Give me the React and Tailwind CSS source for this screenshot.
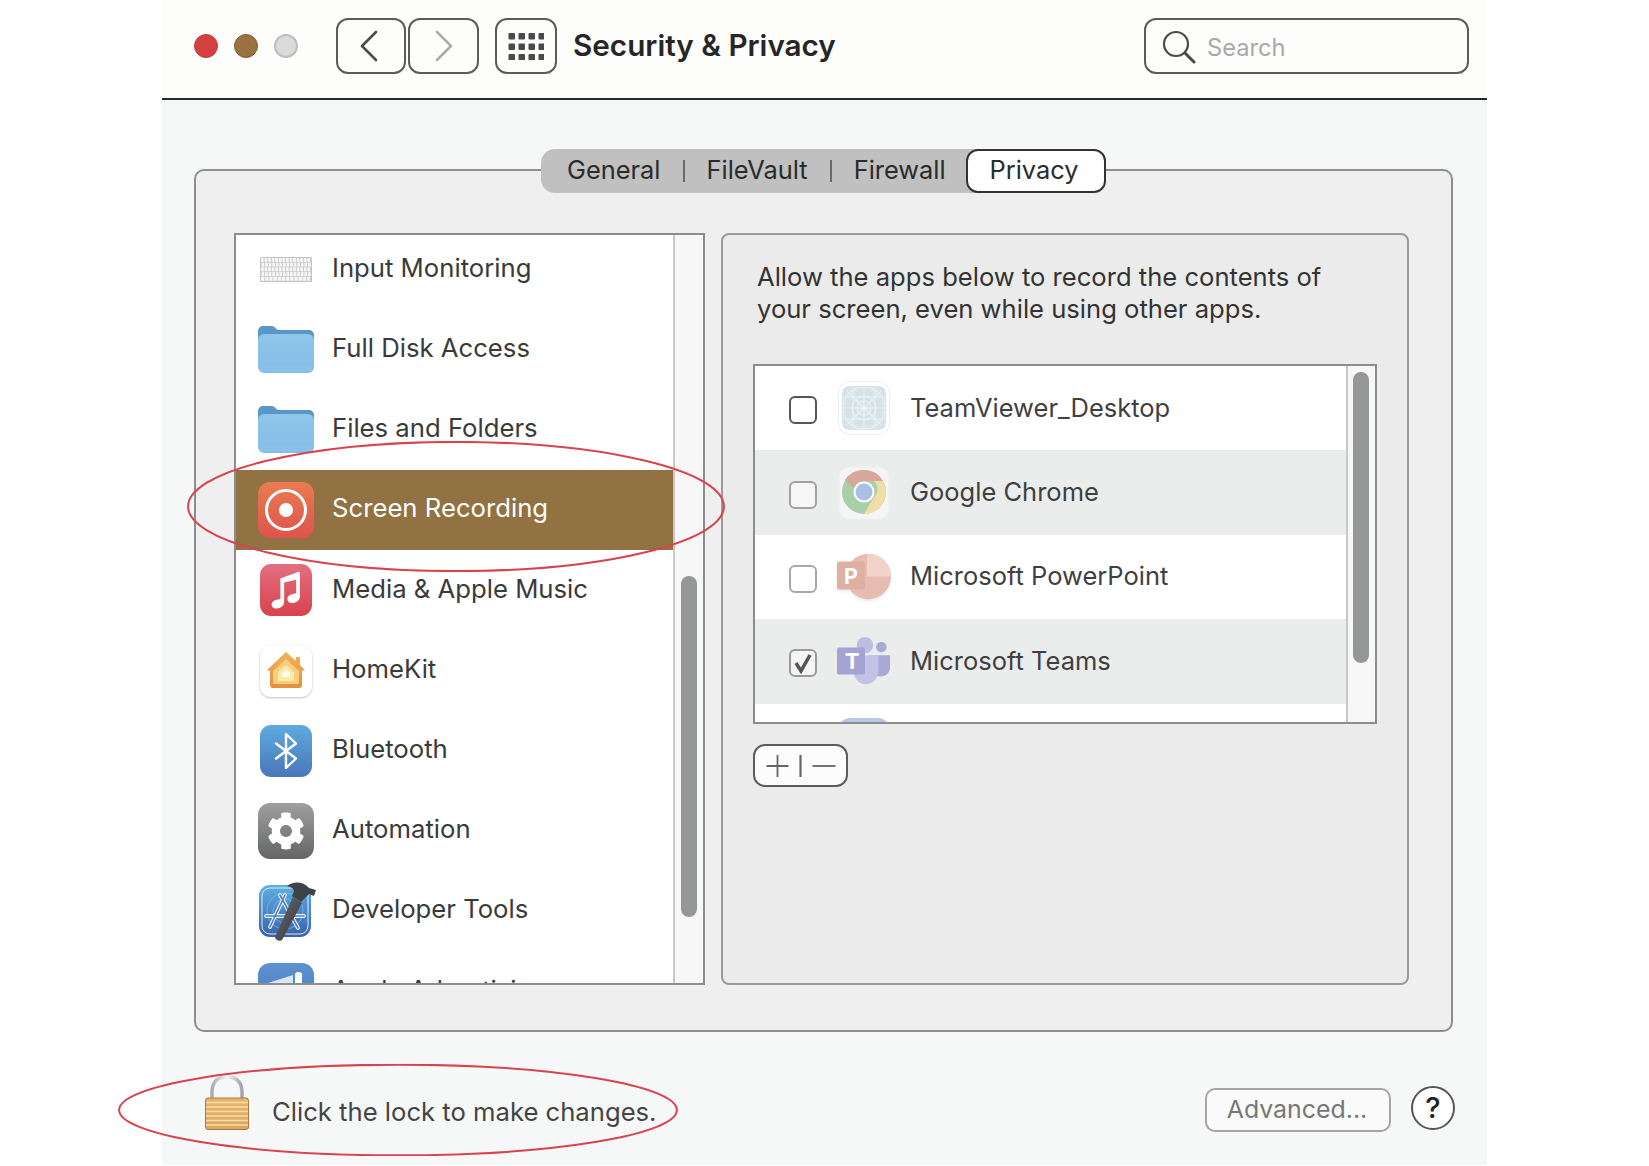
import { FaCog } from "react-icons/fa";

const Squircle = ({ id, from, to }) => (
  <>
    <defs>
      <linearGradient id={id} x1="0" y1="0" x2="0" y2="1">
        <stop offset="0" stopColor={from} />
        <stop offset="1" stopColor={to} />
      </linearGradient>
    </defs>
    <rect x="0" y="0" width="56" height="56" rx="12" fill={`url(#${id})`} />
  </>
);

const KeyboardIcon = () => {
  const rows = [14, 14, 14, 14, 12];
  return (
    <svg width="52" height="25" viewBox="0 0 52 25">
      <rect width="52" height="25" rx="1.5" fill="#c4c4c4" />
      {rows.map((count, r) =>
        Array.from({ length: count }).map((_, k) => {
          const w = 50 / count;
          return (
            <rect
              key={`${r}-${k}`}
              x={1 + k * w + (r % 2) * 0.5}
              y={1 + r * 4.7}
              width={w - 0.8}
              height={4}
              fill="#f7f7f7"
            />
          );
        })
      )}
    </svg>
  );
};

const FolderIcon = ({ id }) => (
  <svg width="56" height="48" viewBox="0 0 56 48">
    <defs>
      <linearGradient id={id} x1="0" y1="0" x2="0" y2="1">
        <stop offset="0" stopColor="#8ec5ea" />
        <stop offset="1" stopColor="#85bde5" />
      </linearGradient>
    </defs>
    <path d="M0 30V5a5 5 0 0 1 5-5h9c3 0 4 4 7 4h30a5 5 0 0 1 5 5v21z" fill="#5a96c6" />
    <rect x="0" y="8" width="56" height="39" rx="6" fill={`url(#${id})`} />
    <path d="M0 41h56M1 44h54" stroke="#9ccbeb" strokeWidth="0.7" />
  </svg>
);

const RecordIcon = () => (
  <svg width="56" height="56" viewBox="0 0 56 56">
    <Squircle id="rec" from="#e87c50" to="#dd544e" />
    <circle cx="28" cy="28" r="19.500" fill="none" stroke="#fff" strokeWidth="3" />
    <circle cx="28" cy="28" r="7" fill="#fff" />
  </svg>
);

const MusicIcon = () => (
  <svg width="52" height="52" viewBox="0 0 56 56">
    <Squircle id="music" from="#e2707f" to="#d8424e" />
    <path
      transform="translate(0 -2)"
      d="M21 18 41 10.500c1-.4 2 .2 2 1.500V37c0 3.500-3 6.500-7.500 7-3.500.4-6-1.500-6-4.300 0-2.900 2.300-4.700 5.500-5.300l4-.8V19l-13 3V43c0 3.500-3 6.500-7.500 7-3.500.4-6-1.500-6-4.300 0-2.900 2.300-4.700 5.500-5.300l4-.8V20.500c0-1.300 0-2.100-1-2.500z"
      fill="#fff"
    />
  </svg>
);

const HomeIcon = () => (
  <svg width="52" height="52" viewBox="0 0 52 52" className="drop-shadow-[0_1px_1px_rgba(0,0,0,0.25)]">
    <defs>
      <linearGradient id="house" x1="0" y1="0" x2="0" y2="1">
        <stop offset="0" stopColor="#f2b25a" />
        <stop offset="1" stopColor="#e48f3c" />
      </linearGradient>
    </defs>
    <rect width="52" height="52" rx="11" fill="#fff" />
    <path d="M7 25 26 7l10 9v-4h4v8l5 5-3 1v14a3 3 0 0 1-3 3H13a3 3 0 0 1-3-3V26z" fill="url(#house)" />
    <path d="M13 26 26 14l13 12v12a1 1 0 0 1-1 1H14a1 1 0 0 1-1-1z" fill="#f6cf7c" />
    <path d="M18 27l8-7 8 7v8a1 1 0 0 1-1 1H19a1 1 0 0 1-1-1z" fill="#fbe9a8" />
    <path d="M22 28l4-3.500 4 3.500v4h-8z" fill="#fffbe8" />
  </svg>
);

const BluetoothIcon = () => (
  <svg width="52" height="52" viewBox="0 0 52 52">
    <defs>
      <linearGradient id="bt" x1="0" y1="0" x2="0" y2="1">
        <stop offset="0" stopColor="#5eabdf" />
        <stop offset="1" stopColor="#4a76bb" />
      </linearGradient>
    </defs>
    <rect width="52" height="52" rx="11" fill="url(#bt)" />
    <path
      d="M16 18.500 36 33.500 26 43V9l10 9.500-20 15"
      fill="none"
      stroke="#fff"
      strokeWidth="2.400"
      strokeLinejoin="round"
      strokeLinecap="round"
    />
  </svg>
);

const AutomationIcon = () => (
  <div className="w-[56px] h-[56px] rounded-[12px] bg-gradient-to-b from-[#a0a0a0] to-[#646566] flex items-center justify-center">
    <FaCog className="text-white w-[38px] h-[38px]" />
  </div>
);

const DevToolsIcon = () => (
  <svg width="58" height="62" viewBox="0 0 58 62" className="ml-[3px] overflow-visible">
    <defs>
      <linearGradient id="xc" x1="0" y1="0" x2="0" y2="1">
        <stop offset="0" stopColor="#5cb1e2" />
        <stop offset="1" stopColor="#3a60ad" />
      </linearGradient>
      <linearGradient id="hammer" x1="0" y1="0" x2="1" y2="1">
        <stop offset="0" stopColor="#6d7075" />
        <stop offset="1" stopColor="#2f3136" />
      </linearGradient>
    </defs>
    <rect x="0" y="5" width="52" height="52" rx="11" fill="url(#xc)" />
    <rect x="3" y="8" width="46" height="46" rx="8" fill="none" stroke="#dbe9f6" strokeWidth="1" />
    <circle cx="26" cy="31" r="18" fill="none" stroke="#7fbce6" strokeWidth="0.7" />
    <circle cx="26" cy="31" r="12" fill="none" stroke="#7fbce6" strokeWidth="0.7" />
    <path d="M21 15l18 33M26 15 11 47M7 36h38" fill="none" stroke="#eef4fb" strokeWidth="3.800" strokeLinecap="round" />
    <path d="M21 15l18 33M26 15 11 47M7 36h38" fill="none" stroke="#4c7fc4" strokeWidth="1.600" strokeLinecap="round" />
    <path d="M34 17l9 6L23 60c-1.500 2-7 0-7-3z" fill="url(#hammer)" />
    <path d="M28 6C34 1 44 1 50 8l7 2-2 6-5-2-8 8-9-6 2-5c-1-3-3-4-7-5z" fill="#3f4247" />
  </svg>
);

const AdvertisingIcon = () => (
  <svg width="56" height="56" viewBox="0 0 56 56">
    <Squircle id="ads" from="#5b92cf" to="#4a76bb" />
    <path d="M10 20 35 12v30L10 34z" fill="#dbe6f4" />
    <rect x="37" y="9" width="7" height="38" rx="3" fill="#fff" />
  </svg>
);

const TeamViewerIcon = () => (
  <svg width="52" height="54" viewBox="0 0 52 54">
    <rect x="0.500" y="0.500" width="51" height="53" rx="11" fill="#fff" stroke="#eeeeee" />
    <rect x="4" y="5" width="44" height="44" rx="7" fill="#d6e3e8" />
    <g fill="none" stroke="#e9f1f3" strokeWidth="1.100">
      <circle cx="26" cy="27" r="21" />
      <circle cx="26" cy="27" r="12" />
      <circle cx="26" cy="27" r="7" />
      <path d="M4 27h44M26 5v44M15 5v44M37 5v44M4 16h44M4 38h44M9 10l34 34M43 10 9 44" />
    </g>
  </svg>
);

const ChromeIcon = () => (
  <svg width="52" height="54" viewBox="0 0 52 54">
    <rect x="1" y="1" width="50" height="52" rx="10" fill="#f5f5f5" stroke="#efefef" />
    <circle cx="26" cy="26" r="22" fill="#a9cfaa" />
    <path d="M26 4a22 22 0 0 1 19 11H26a11 11 0 0 0-10 7L7 14A22 22 0 0 1 26 4z" fill="#d9a69c" />
    <path d="M45 15a22 22 0 0 1-19 33l10-17a11 11 0 0 0 0-16z" fill="#efdea8" />
    <circle cx="26" cy="26" r="10.500" fill="#fff" />
    <circle cx="26" cy="26" r="8.500" fill="#a9c0e4" />
  </svg>
);

const PowerPointIcon = () => (
  <svg width="56" height="50" viewBox="0 0 56 50" className="drop-shadow-[0_2px_1px_rgba(0,0,0,0.08)]">
    <circle cx="32.500" cy="24.500" r="23.500" fill="#e6bcb1" />
    <path d="M31 1a23.500 23.500 0 0 1 25 23.500H31z" fill="#f2d3ca" />
    <rect x="0" y="9" width="29" height="29" rx="2" fill="#dfb0a2" />
    <text x="7" y="32" fill="#fff" fontSize="23" fontWeight="700" fontFamily="Inter, sans-serif">P</text>
  </svg>
);

const TeamsIcon = () => (
  <svg width="56" height="50" viewBox="0 0 56 50">
    <circle cx="29" cy="8.500" r="8.500" fill="#bdbde0" />
    <circle cx="46" cy="10.500" r="5.500" fill="#a9a9d6" />
    <path d="M34 19h21v13c0 5-4 9-10 9s-11-4-11-9z" fill="#a9a9d6" />
    <path d="M17 19h26v16a13 14 0 0 1-26 0z" fill="#c3c3e6" />
    <rect x="0" y="11" width="29" height="28" rx="2" fill="#a4a4d4" />
    <text x="8" y="33" fill="#fff" fontSize="23" fontWeight="700" fontFamily="Inter, sans-serif">T</text>
  </svg>
);

const listItems = [
  { name: "Input Monitoring", icon: <KeyboardIcon /> },
  { name: "Full Disk Access", icon: <FolderIcon id="folderA" /> },
  { name: "Files and Folders", icon: <FolderIcon id="folderB" /> },
  { name: "Screen Recording", icon: <RecordIcon />, selected: true },
  { name: "Media & Apple Music", icon: <MusicIcon /> },
  { name: "HomeKit", icon: <HomeIcon /> },
  { name: "Bluetooth", icon: <BluetoothIcon /> },
  { name: "Automation", icon: <AutomationIcon /> },
  { name: "Developer Tools", icon: <DevToolsIcon /> },
  { name: "Apple Advertising", icon: <AdvertisingIcon /> },
];

const apps = [
  { name: "TeamViewer_Desktop", icon: <TeamViewerIcon />, box: "border-[#555555] bg-white" },
  { name: "Google Chrome", icon: <ChromeIcon />, box: "border-[#a2a2a2] bg-[#f6f6f6]", alt: true },
  { name: "Microsoft PowerPoint", icon: <PowerPointIcon />, box: "border-[#a8a8a8] bg-white" },
  { name: "Microsoft Teams", icon: <TeamsIcon />, box: "border-[#9a9a9a] bg-[#f4f4f4]", alt: true, checked: true },
];

const Oval = ({ className }) => (
  <svg className={`absolute pointer-events-none ${className}`} viewBox="0 0 100 100" preserveAspectRatio="none">
    <ellipse cx="50" cy="50" rx="49.800" ry="49.300" fill="none" stroke="#d9434e" strokeWidth="2" vectorEffect="non-scaling-stroke" />
  </svg>
);

export default function App() {
  return (
    <div className="relative h-[1166px] overflow-hidden bg-white [font-family:Inter,sans-serif]">
      <div className="ml-[162px] w-[1325px] h-[1165px] bg-[#f6f8f8] flex flex-col">
        {/* title bar */}
        <div className="h-[100px] bg-[#fdfdfc] border-b-2 border-[#2a2a2a] flex items-center pb-[7px] pl-[32px] pr-[18px]">
          <div className="flex gap-[16px]">
            <span className="w-[24px] h-[24px] rounded-full bg-[#d4403f] border border-[#c43a3a]" />
            <span className="w-[24px] h-[24px] rounded-full bg-[#9a7241] border border-[#7f5c30]" />
            <span className="w-[24px] h-[24px] rounded-full bg-[#dbdbdb] border-2 border-[#bdbdbd]" />
          </div>
          <button className="ml-[38px] w-[70px] h-[56px] rounded-[12px] border-2 border-[#5c5c5c] flex items-center justify-center">
            <svg width="18" height="32" viewBox="0 0 18 32" className="-ml-[4px]">
              <path d="M16 2 2 16l14 14" fill="none" stroke="#4a4a4a" strokeWidth="2.600" strokeLinecap="round" strokeLinejoin="round" />
            </svg>
          </button>
          <button className="ml-[2px] w-[71px] h-[56px] rounded-[12px] border-2 border-[#5c5c5c] flex items-center justify-center">
            <svg width="18" height="32" viewBox="0 0 18 32">
              <path d="M2 2l14 14L2 30" fill="none" stroke="#ababab" strokeWidth="2.600" strokeLinecap="round" strokeLinejoin="round" />
            </svg>
          </button>
          <button className="ml-[16px] w-[62px] h-[56px] rounded-[12px] border-2 border-[#5c5c5c] flex items-center justify-center">
            <svg width="36" height="28" viewBox="0 0 36 28" fill="#4a4a4a" className="-ml-[1px]">
              {[0, 1, 2].map((r) =>
                [0, 1, 2, 3].map((c) => <rect key={`${r}${c}`} x={c * 10 + 0.5} y={r * 10.500 + 1} width="6.500" height="6.500" rx="1" />)
              )}
            </svg>
          </button>
          <h1 className="ml-[16px] text-[29.7px] font-semibold text-[#262626] whitespace-nowrap">Security &amp; Privacy</h1>
          <div className="ml-auto w-[325px] h-[56px] rounded-[12px] border-2 border-[#5c5c5c] flex items-center pl-[16px]">
            <svg width="34" height="34" viewBox="0 0 34 34" fill="none" stroke="#4a4a4a" strokeLinecap="round" className="mt-[2px]">
              <circle cx="14" cy="14" r="12" strokeWidth="2.200" />
              <path d="M23 23l9 9" strokeWidth="3" />
            </svg>
            <span className="ml-[11px] pt-[4px] text-[23.7px] text-[#a9a9a9]">Search</span>
          </div>
        </div>

        {/* tab box */}
        <div className="mt-[49px] ml-[32px] w-[1259px]">
          <div className="relative z-10 flex justify-center">
            <div className="h-[44px] w-[565px] rounded-[14px] bg-[#c0c0c0] flex items-center text-[25.4px] text-[#2b2b2b]">
              <span className="ml-[26px] pb-[2px]">General</span>
              <span className="ml-[22px] w-[2px] h-[22px] bg-[#6a6a6a]" />
              <span className="ml-[22px] pb-[2px]">FileVault</span>
              <span className="ml-[22px] w-[2px] h-[22px] bg-[#6a6a6a]" />
              <span className="ml-[22px] pb-[2px]">Firewall</span>
              <span className="ml-auto h-[44px] w-[140px] rounded-[12px] border-2 border-[#333333] bg-white flex items-center justify-center pb-[2px] pr-[4px]">
                Privacy
              </span>
            </div>
          </div>
          <div className="-mt-[24px] h-[863px] rounded-[10px] border-2 border-[#8e8e8e] bg-[#efefef] pt-[62px] pl-[38px] flex gap-[16px]">
            {/* categories */}
            <div className="w-[471px] h-[752px] border-2 border-[#8c8c8c] bg-white flex">
              <div className="flex-1 overflow-hidden">
                <div className="-mt-[5.5px]">
                  {listItems.map((item) => (
                    <div
                      key={item.name}
                      className={`h-[80.2px] flex items-center ${item.selected ? "bg-[#927142] text-white" : "text-[#3a3a3a]"}`}
                    >
                      <div className="w-[96px] pl-[22px] shrink-0">
                        <div className="w-[56px] flex items-center justify-center">{item.icon}</div>
                      </div>
                      <span className="text-[25.7px] pb-[3px] whitespace-nowrap">{item.name}</span>
                    </div>
                  ))}
                </div>
              </div>
              <div className="w-[30px] border-l-2 border-[#c8c8c8] bg-[#f7f7f7] pt-[341px] pl-[6px]">
                <div className="w-[16px] h-[341px] rounded-full bg-[#959796]" />
              </div>
            </div>

            {/* apps panel */}
            <div className="w-[688px] h-[752px] rounded-[8px] border-2 border-[#9a9a9a] bg-[#ebebeb] pl-[30px] pt-[26px]">
              <p className="text-[25.6px] leading-[32px] text-[#333333] ml-[4px] whitespace-nowrap">
                Allow the apps below to record the contents of
                <br />
                your screen, even while using other apps.
              </p>
              <div className="mt-[39px] w-[624px] h-[360px] border-2 border-[#8c8c8c] bg-white flex">
                <div className="flex-1 overflow-hidden">
                  {apps.map((app) => (
                    <div key={app.name} className={`h-[84.4px] flex items-center pl-[34px] ${app.alt ? "bg-[#ebeded]" : ""}`}>
                      <span className={`mt-[4px] w-[28px] h-[28px] rounded-[6px] border-2 flex items-center justify-center shrink-0 ${app.box}`}>
                        {app.checked && (
                          <svg width="20" height="22" viewBox="0 0 20 22">
                            <path d="M3 11l5 8L17 3" fill="none" stroke="#555555" strokeWidth="3.500" />
                          </svg>
                        )}
                      </span>
                      <div className="ml-[20px] w-[54px] flex items-center justify-center shrink-0">{app.icon}</div>
                      <span className="ml-[19px] text-[25.5px] pb-[1px] text-[#3f3f3f] whitespace-nowrap">{app.name}</span>
                    </div>
                  ))}
                  <div className="pt-[14px] pl-[83px]">
                    <div className="w-[52px] h-[52px] rounded-[12px] bg-[#b4c9e8]" />
                  </div>
                </div>
                <div className="w-[29px] border-l-2 border-[#c8c8c8] bg-[#f7f7f7] pt-[6px] pl-[5px]">
                  <div className="w-[16px] h-[291px] rounded-full bg-[#959796]" />
                </div>
              </div>
              <div className="mt-[20px] w-[95px] h-[43px] rounded-[12px] border-2 border-[#5c5c5c] bg-[#fcfcfc] flex items-center justify-center">
                <svg width="84" height="28" viewBox="0 0 84 28" stroke="#666666" strokeWidth="1.800" fill="none">
                  <path d="M18.500 3v22M7.500 14h22" />
                  <path d="M41.500 3v22" strokeWidth="2.200" />
                  <path d="M53.500 14h23" />
                </svg>
              </div>
            </div>
          </div>
        </div>

        {/* footer */}
        <div className="flex items-start pl-[43px] pr-[32px]">
          <svg width="44" height="55" viewBox="0 0 44 55" className="mt-[43px]">
            <defs>
              <linearGradient id="shackle" x1="0" y1="0" x2="1" y2="0">
                <stop offset="0" stopColor="#a9adb2" />
                <stop offset="0.500" stopColor="#f2f3f4" />
                <stop offset="1" stopColor="#a0a4a9" />
              </linearGradient>
              <linearGradient id="lockbody" x1="0" y1="0" x2="0" y2="1">
                <stop offset="0" stopColor="#e8b56e" />
                <stop offset="1" stopColor="#dba55c" />
              </linearGradient>
            </defs>
            <path d="M7 24V18C7 7 12 2 22 2s15 5 15 16v6" fill="none" stroke="url(#shackle)" strokeWidth="3.500" />
            <rect x="0.500" y="23" width="43" height="31.500" rx="2.500" fill="url(#lockbody)" stroke="#a97a40" strokeWidth="1" />
            <path d="M1 27.500h42M1 32h42M1 36.500h42M1 41h42M1 45.500h42M1 50h42" stroke="#f9dfab" strokeWidth="1.700" />
          </svg>
          <span className="ml-[23px] mt-[64px] text-[25.65px] leading-[32px] text-[#444444] whitespace-nowrap">Click the lock to make changes.</span>
          <button className="ml-auto mt-[56px] w-[186px] h-[44px] pr-[2px] rounded-[10px] border-2 border-[#a5a5a5] bg-[#fafafa] text-[24.9px] text-[#777777]">
            Advanced...
          </button>
          <button className="ml-[20px] mt-[54px] w-[44px] h-[44px] rounded-full border-2 border-[#555555] bg-white text-[29px] font-medium text-[#222222] flex items-center justify-center">
            ?
          </button>
        </div>
      </div>

      {/* hand drawn marks */}
      <Oval className="left-[187px] top-[441px] w-[538px] h-[131px]" />
      <Oval className="left-[118px] top-[1064px] w-[560px] h-[92px]" />
    </div>
  );
}
